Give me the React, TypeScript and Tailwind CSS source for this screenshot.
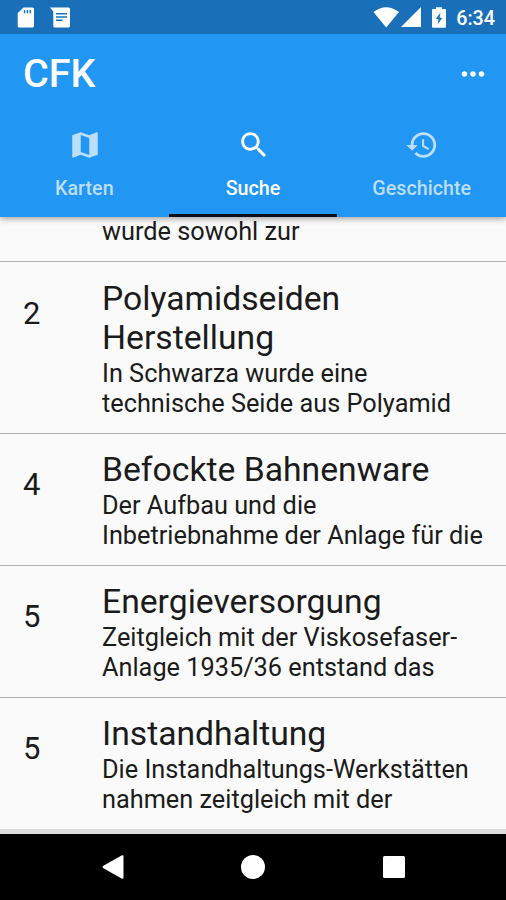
import type { ReactNode } from 'react';

type Entry = { count: string; title: string[]; text: string[] };

const entries: Entry[] = [
  { count: '2', title: ['Polyamidseiden', 'Herstellung'], text: ['In Schwarza wurde eine', 'technische Seide aus Polyamid'] },
  { count: '4', title: ['Befockte Bahnenware'], text: ['Der Aufbau und die', 'Inbetriebnahme der Anlage für die'] },
  { count: '5', title: ['Energieversorgung'], text: ['Zeitgleich mit der Viskosefaser-', 'Anlage 1935/36 entstand das'] },
  { count: '5', title: ['Instandhaltung'], text: ['Die Instandhaltungs-Werkstätten', 'nahmen zeitgleich mit der'] },
];

function Icon({ d, className }: { d: string; className: string }) {
  return (
    <svg viewBox="0 0 24 24" className={className} fill="currentColor">
      <path d={d} />
    </svg>
  );
}

const MAP = 'M20.5 3l-.16.03L15 5.1 9 3 3.36 4.9c-.21.07-.36.25-.36.48V20.5c0 .28.22.5.5.5l.16-.03L9 18.9l6 2.1 5.64-1.9c.21-.07.36-.25.36-.48V3.5c0-.28-.22-.5-.5-.5zM15 19l-6-2.11V5l6 2.11V19z';
const SEARCH = 'M15.5 14h-.79l-.28-.27C15.41 12.59 16 11.11 16 9.5 16 5.91 13.09 3 9.5 3S3 5.91 3 9.5 5.91 16 9.5 16c1.61 0 3.09-.59 4.23-1.57l.27.28v.79l5 4.99L20.49 19l-4.99-5zm-6 0C7.01 14 5 11.99 5 9.5S7.01 5 9.5 5 14 7.01 14 9.5 11.99 14 9.5 14z';
const HISTORY = 'M13 3c-4.97 0-9 4.03-9 9H1l3.89 3.89.07.14L9 12H6c0-3.87 3.13-7 7-7s7 3.13 7 7-3.13 7-7 7c-1.93 0-3.68-.79-4.94-2.06l-1.42 1.42C8.27 19.99 10.51 21 13 21c4.97 0 9-4.03 9-9s-4.03-9-9-9zm-1 5v5l4.28 2.54.72-1.21-3.5-2.08V8H12z';
const MORE = 'M6 10c-1.1 0-2 .9-2 2s.9 2 2 2 2-.9 2-2-.9-2-2-2zm12 0c-1.1 0-2 .9-2 2s.9 2 2 2 2-.9 2-2-.9-2-2-2zm-6 0c-1.1 0-2 .9-2 2s.9 2 2 2 2-.9 2-2-.9-2-2-2z';

function StatusBar() {
  return (
    <div className="z-20 flex h-[34px] shrink-0 items-center bg-[#1a70b8] text-white">
      <svg viewBox="0 0 17 21" className="ml-[17px] h-[21px] w-[17px]">
        <path fill="currentColor" fillRule="evenodd" d="M6.5.5H15.500a1.500 1.500 0 0 1 1.500 1.500V19a1.500 1.500 0 0 1-1.500 1.500H2.200A1.500 1.500 0 0 1 .700 19V6.300zM6.800 3v3.300h1.500V3zM9.700 3v3.300h1.500V3zM12.600 3v3.300h1.500V3z" />
      </svg>
      <svg viewBox="0 0 20 21" className="ml-4 h-[21px] w-5">
        <path fill="currentColor" fillRule="evenodd" d="M0 .5H18.500A1.500 1.500 0 0 1 20 2V19a1.500 1.500 0 0 1-1.500 1.500H4.800A1.500 1.500 0 0 1 3.300 19V4.500zM6 6v1.500h11V6zM6 9.300v1.500h11V9.300zM6 12.600v1.500h6.500v-1.500z" />
      </svg>
      <svg viewBox="0 0 27 21" className="ml-auto h-[21px] w-[27px]">
        <path fill="currentColor" d="M.5 5Q13 -4.500 26 5L13.200 20.500z" />
      </svg>
      <svg viewBox="0 0 20 20" className="ml-[1px] h-5 w-5">
        <path fill="currentColor" d="M0 20L20 0V20z" />
      </svg>
      <svg viewBox="0 0 14 21" className="ml-[11px] h-[21px] w-[14px]">
        <path fill="currentColor" fillRule="evenodd" d="M4 .300h6V2H13a1 1 0 0 1 1 1V19.700a1 1 0 0 1-1 1H1a1 1 0 0 1-1-1V3a1 1 0 0 1 1-1H4zM8.500 5.800L3.700 11.800L6.500 12.300L5.600 17.200L10.300 10.900L7.600 10.400z" />
      </svg>
      <span className="mt-[3px] mr-[11px] ml-[10px] text-[19.700px] leading-6 font-medium">6:34</span>
    </div>
  );
}

function Tab({ label, active, children }: { label: string; active?: boolean; children: ReactNode }) {
  return (
    <div className={`flex flex-1 flex-col items-center border-b-[3px] pt-[15px] ${active ? 'border-[#0a0f18] text-white' : 'border-transparent text-[#bbdefb]'}`}>
      {children}
      <span className="mt-[15px] text-[19.700px] leading-[23px] font-medium">{label}</span>
    </div>
  );
}

export default function App() {
  return (
    <div className="flex h-[900px] w-[506px] flex-col overflow-hidden bg-[#fafafa] font-['Roboto',sans-serif] text-[#1b1b1b]">
      <StatusBar />
      <header className="z-10 flex h-[183px] shrink-0 flex-col bg-[#2196f3] text-white shadow-[0_2px_6px_rgba(0,0,0,0.350)]">
        <div className="flex h-[79px] items-center justify-between pr-4 pl-[23px]">
          <h1 className="text-[39.500px] leading-[46px] font-medium">CFK</h1>
          <Icon d={MORE} className="size-[34px]" />
        </div>
        <nav className="flex flex-1">
          <Tab label="Karten"><Icon d={MAP} className="ml-px size-[34px]" /></Tab>
          <Tab label="Suche" active><Icon d={SEARCH} className="ml-px size-[34px]" /></Tab>
          <Tab label="Geschichte"><Icon d={HISTORY} className="ml-px size-[34px]" /></Tab>
        </nav>
      </header>
      <main className="flex min-h-0 flex-1 flex-col overflow-hidden">
        <div className="h-[45.400px] shrink-0 border-b border-[#b4b4b4] pl-[102px]">
          <p className="text-[25.300px] leading-[29.600px]">wurde sowohl zur</p>
        </div>
        {entries.map((e, i) => (
          <article key={i} className="flex shrink-0 border-b border-[#b4b4b4] pt-[16.500px] pb-[14px] pl-[23px] whitespace-nowrap last:border-b-0">
            <span className="w-[79px] pt-[16px] text-[31px] leading-[37px]">{e.count}</span>
            <div>
              <div className="mb-px">
                {e.title.map((t) => <h2 key={t} className="text-[33.700px] leading-[39.500px]">{t}</h2>)}
              </div>
              {e.text.map((t) => <p key={t} className="text-[25.300px] leading-[30px]">{t}</p>)}
            </div>
          </article>
        ))}
      </main>
      <div className="h-[5px] shrink-0 bg-[#dedede]" />
      <footer className="flex h-[66px] shrink-0 items-center bg-black text-white">
        <svg viewBox="0 0 22 24" className="ml-[102px] h-6 w-[22px]">
          <path fill="currentColor" d="M20 .300Q21.500 0 21.500 1.500V22.500Q21.500 24 20 23.700L1 13Q0 12 1 11z" />
        </svg>
        <div className="ml-[117px] size-6 rounded-full bg-white" />
        <div className="ml-[118px] size-[22px] rounded-[1.500px] bg-white" />
      </footer>
    </div>
  );
}
